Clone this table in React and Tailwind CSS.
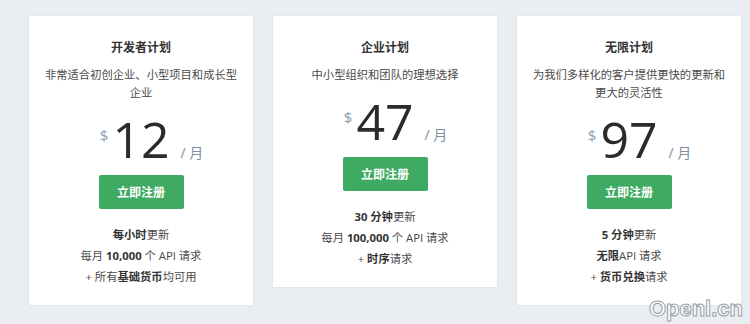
import React from "react";

const plans = [
  {
    title: "开发者计划",
    desc: "非常适合初创企业、小型项目和成长型企业",
    price: "12",
    features: [
      [<b key="a" className="font-bold text-[#333]">每小时</b>, "更新"],
      ["每月 ", <b key="b" className="font-bold text-[#333]">10,000</b>, " 个 API 请求"],
      ["+ 所有", <b key="c" className="font-bold text-[#333]">基础货币</b>, "均可用"],
    ],
  },
  {
    title: "企业计划",
    desc: "中小型组织和团队的理想选择",
    price: "47",
    features: [
      [<b key="a" className="font-bold text-[#333]">30 分钟</b>, "更新"],
      ["每月 ", <b key="b" className="font-bold text-[#333]">100,000</b>, " 个 API 请求"],
      ["+ ", <b key="c" className="font-bold text-[#333]">时序</b>, "请求"],
    ],
  },
  {
    title: "无限计划",
    desc: "为我们多样化的客户提供更快的更新和更大的灵活性",
    price: "97",
    features: [
      [<b key="a" className="font-bold text-[#333]">5 分钟</b>, "更新"],
      [<b key="b" className="font-bold text-[#333]">无限</b>, "API 请求"],
      ["+ ", <b key="c" className="font-bold text-[#333]">货币兑换</b>, "请求"],
    ],
  },
];

function Card({ plan }) {
  return (
    <div className="w-[224px] bg-white shadow-[0_0_2px_rgba(0,0,0,0.08)] px-[14px] pt-[23px] pb-[18px] flex flex-col items-center text-center">
      <div className="text-[12px] leading-[18px] font-bold text-[#333]">{plan.title}</div>
      <div className="mt-[9px] text-[11.3px] leading-[18px] text-[#4a4a4a]">{plan.desc}</div>
      <div className="mt-[12px] w-full grid grid-cols-[1fr_auto_1fr] items-baseline">
        <span className="self-start justify-self-end mt-[14px] mr-[4px] text-[15px] leading-[15px] text-[#8d9db3] font-['Open_Sans',sans-serif]">
          $
        </span>
        <span className="text-[50px] leading-[50px] font-normal text-[#2b2b2b] font-['Open_Sans',sans-serif]">
          {plan.price}
        </span>
        <span className="justify-self-start ml-[11px] text-[14px] leading-[15px] text-[#7f8ea3] font-['Open_Sans','Noto_Sans_CJK_SC',sans-serif] whitespace-nowrap">
          / 月
        </span>
      </div>
      <button className="mt-[11px] w-[85px] h-[34px] rounded-[2px] bg-[#3fab62] text-white text-[12px] font-bold font-['Noto_Sans_CJK_SC',sans-serif]">
        立即注册
      </button>
      <div className="mt-[15px] flex flex-col text-[11.3px] leading-[21px] text-[#4a4a4a]">
        {plan.features.map((f, i) => (
          <div key={i} className="whitespace-nowrap">{f}</div>
        ))}
      </div>
    </div>
  );
}

export default function App() {
  return (
    <div className="relative w-[750px] h-[324px] overflow-hidden bg-[#eaedf1] font-['Open_Sans','Noto_Sans_CJK_SC',sans-serif]">
      <div className="flex items-start gap-[20px] pl-[29px] pt-[16px]">
        {plans.map((p) => (
          <Card key={p.price} plan={p} />
        ))}
      </div>
      <div className="absolute right-[7px] bottom-[4px] text-[22px] leading-none font-bold text-white font-['Liberation_Sans',sans-serif] [-webkit-text-stroke:1px_#9a9fa6]">
        Openl.cn
      </div>
    </div>
  );
}
